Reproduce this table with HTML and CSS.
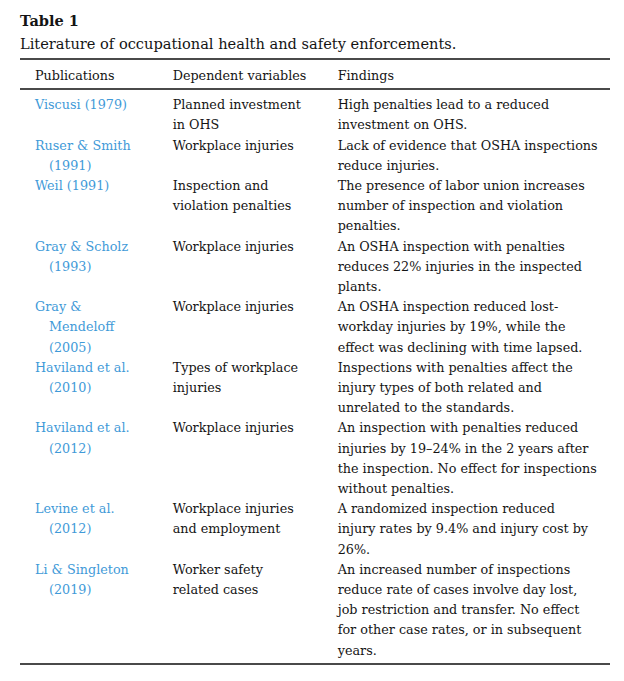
FILE: index.html
```html
<!DOCTYPE html>
<html>
<head>
<meta charset="utf-8">
<link rel="stylesheet" href="styles.css">
</head>
<body>
<div class="page">
  <div class="caption">
    <div class="label">Table 1</div>
    <div class="title">Literature of occupational health and safety enforcements.</div>
  </div>
  <div class="table">
    <div class="row head">
      <div class="c1">Publications</div>
      <div class="c2">Dependent variables</div>
      <div class="c3">Findings</div>
    </div>
    <div class="body">
      <div class="row">
        <div class="c1 ref">Viscusi (1979)</div>
        <div class="c2">Planned investment<br>in OHS</div>
        <div class="c3">High penalties lead to a reduced<br>investment on OHS.</div>
      </div>
      <div class="row">
        <div class="c1 ref">Ruser &amp; Smith<br>(1991)</div>
        <div class="c2">Workplace injuries</div>
        <div class="c3">Lack of evidence that OSHA inspections<br>reduce injuries.</div>
      </div>
      <div class="row">
        <div class="c1 ref">Weil (1991)</div>
        <div class="c2">Inspection and<br>violation penalties</div>
        <div class="c3">The presence of labor union increases<br>number of inspection and violation<br>penalties.</div>
      </div>
      <div class="row">
        <div class="c1 ref">Gray &amp; Scholz<br>(1993)</div>
        <div class="c2">Workplace injuries</div>
        <div class="c3">An OSHA inspection with penalties<br>reduces 22% injuries in the inspected<br>plants.</div>
      </div>
      <div class="row">
        <div class="c1 ref">Gray &amp;<br>Mendeloff<br>(2005)</div>
        <div class="c2">Workplace injuries</div>
        <div class="c3">An OSHA inspection reduced lost-<br>workday injuries by 19%, while the<br>effect was declining with time lapsed.</div>
      </div>
      <div class="row">
        <div class="c1 ref">Haviland et al.<br>(2010)</div>
        <div class="c2">Types of workplace<br>injuries</div>
        <div class="c3">Inspections with penalties affect the<br>injury types of both related and<br>unrelated to the standards.</div>
      </div>
      <div class="row">
        <div class="c1 ref">Haviland et al.<br>(2012)</div>
        <div class="c2">Workplace injuries</div>
        <div class="c3">An inspection with penalties reduced<br>injuries by 19–24% in the 2 years after<br>the inspection. No effect for inspections<br>without penalties.</div>
      </div>
      <div class="row">
        <div class="c1 ref">Levine et al.<br>(2012)</div>
        <div class="c2">Workplace injuries<br>and employment</div>
        <div class="c3">A randomized inspection reduced<br>injury rates by 9.4% and injury cost by<br>26%.</div>
      </div>
      <div class="row">
        <div class="c1 ref">Li &amp; Singleton<br>(2019)</div>
        <div class="c2">Worker safety<br>related cases</div>
        <div class="c3">An increased number of inspections<br>reduce rate of cases involve day lost,<br>job restriction and transfer. No effect<br>for other case rates, or in subsequent<br>years.</div>
      </div>
    </div>
  </div>
</div>
</body>
</html>
```

FILE: styles.css
```css
html, body {
  margin: 0;
  padding: 0;
  background: #ffffff;
}
body {
  font-family: "DejaVu Serif", "Liberation Serif", serif;
  color: #141414;
}
.page {
  width: 590px;
  margin-left: 20px;
  padding-top: 9px;
}
.caption .label {
  font-weight: bold;
  font-size: 14.5px;
  line-height: 23px;
}
.caption .title {
  font-size: 14.6px;
  line-height: 23px;
}
.table {
  margin-top: 3px;
  border-top: 2px solid #4a4a4a;
  border-bottom: 2px solid #4a4a4a;
  font-size: 12.75px;
  line-height: 20.2px;
}
.row {
  display: grid;
  grid-template-columns: 137.7px 165px 1fr;
  padding-left: 15px;
}
.row.head {
  padding-top: 6px;
  padding-bottom: 2px;
  border-bottom: 2px solid #4a4a4a;
}
.body {
  padding-top: 5px;
  padding-bottom: 2px;
}
.ref {
  color: #3f9ad8;
  padding-left: 14px;
  text-indent: -14px;
}
```
